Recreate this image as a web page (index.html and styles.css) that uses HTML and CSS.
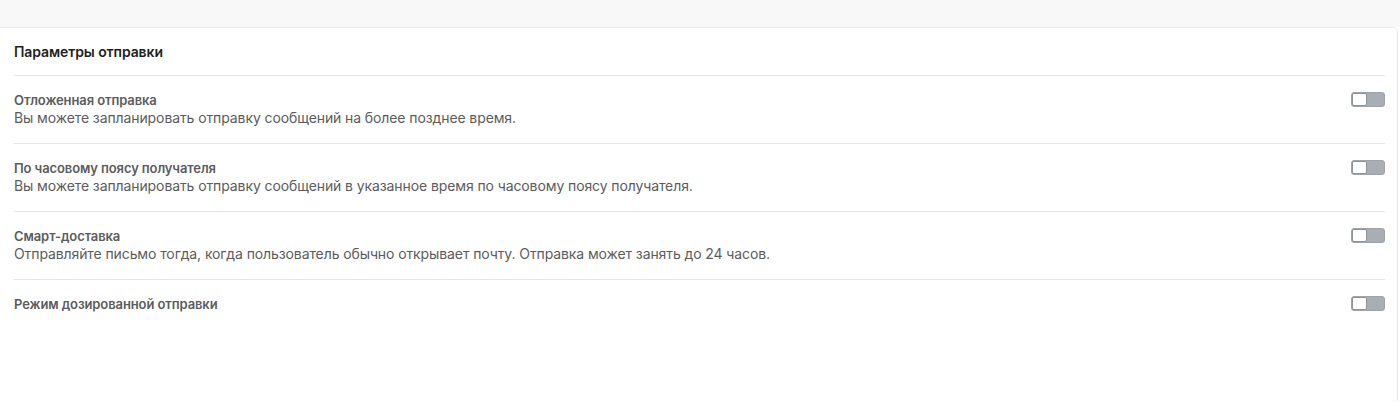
FILE: index.html
```html
<!DOCTYPE html>
<html lang="ru">
<head>
    <meta charset="UTF-8">
    <meta name="viewport" content="width=device-width, initial-scale=1.0">
    <title>Параметры отправки</title>
    <link rel="stylesheet" href="styles.css">
</head>
<body>
    <div class="topbar"></div>

    <div class="card">
        <h3 class="card-title">Параметры отправки</h3>

        <div class="option">
            <div class="option-text">
                <div class="option-name">Отложенная отправка</div>
                <div class="option-desc">Вы можете запланировать отправку сообщений на более позднее время.</div>
            </div>
            <label class="toggle"><span class="knob"></span></label>
        </div>

        <div class="option">
            <div class="option-text">
                <div class="option-name">По часовому поясу получателя</div>
                <div class="option-desc">Вы можете запланировать отправку сообщений в указанное время по часовому поясу получателя.</div>
            </div>
            <label class="toggle"><span class="knob"></span></label>
        </div>

        <div class="option">
            <div class="option-text">
                <div class="option-name">Смарт-доставка</div>
                <div class="option-desc">Отправляйте письмо тогда, когда пользователь обычно открывает почту. Отправка может занять до 24 часов.</div>
            </div>
            <label class="toggle"><span class="knob"></span></label>
        </div>

        <div class="option">
            <div class="option-text">
                <div class="option-name">Режим дозированной отправки</div>
            </div>
            <label class="toggle"><span class="knob"></span></label>
        </div>
    </div>
</body>
</html>
```

FILE: styles.css
```css
body {
    margin: 0;
    background: #ffffff;
    font-family: Inter, "Noto Sans", Arial, sans-serif;
    color: #555;
}

.topbar {
    height: 27px;
    background: #f8f8f9;
}

.card {
    margin-right: 2px;
    min-height: 374px;
    box-sizing: border-box;
    background: #fff;
    border-top: 1px solid #ebebeb;
    border-right: 1px solid #e6e6e6;
    border-top-right-radius: 5px;
    padding: 14px 12px 0 14px;
}

.card-title {
    margin: 0 0 13px 0;
    font-size: 14px;
    line-height: 20px;
    font-weight: 600;
    letter-spacing: -0.1px;
    color: #1f1f1f;
}

.option {
    display: flex;
    justify-content: space-between;
    align-items: flex-start;
    border-top: 1px solid #e5e5e5;
    padding: 16px 0 15px 0;
}

.option:last-child {
    min-height: 16px;
}

.option-name {
    font-size: 13px;
    line-height: 16px;
    font-weight: 600;
    letter-spacing: -0.1px;
    color: #5c5c5c;
}

.option-desc {
    font-size: 14px;
    line-height: 20px;
    letter-spacing: -0.1px;
    color: #5c5c5c;
}

.toggle {
    display: flex;
    width: 34px;
    height: 15px;
    box-sizing: border-box;
    background: #a9aeb5;
    border: 1px solid #9ea3aa;
    border-radius: 3px;
    cursor: pointer;
}

.knob {
    width: 15px;
    height: 13px;
    box-sizing: border-box;
    background: #fff;
    border: 1px solid #8f949b;
    border-radius: 2px;
}
```
